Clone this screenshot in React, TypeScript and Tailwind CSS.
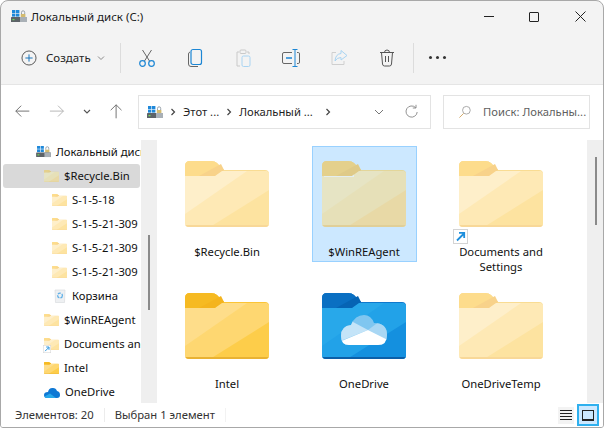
import React, { useId } from "react";

type Palette = {
  tab: string;
  tabDark: string;
  rim: string;
  light: string;
  mid: string;
  dark: string;
  bottom: string;
  gloss?: string;
};

const plain: Palette = { tab: "#fddc8c", tabDark: "#f8d28a", rim: "#f9dc93", light: "#feefca", mid: "#fee9b5", dark: "#fde3a0", bottom: "#f8d898" };
const selected: Palette = { tab: "#e4d08c", tabDark: "#dfca88", rim: "#e3d69a", light: "#e6e4c4", mid: "#e6e0b8", dark: "#e8d9a6", bottom: "#e0cf98", gloss: "#e4eef0" };
const yellow: Palette = { tab: "#f6ba22", tabDark: "#f4b41e", rim: "#fbc436", light: "#fedd8a", mid: "#fed771", dark: "#fdcd4a", bottom: "#e9b233" };
const blue: Palette = { tab: "#0a6fc2", tabDark: "#0664b4", rim: "#0f78cc", light: "#28a8ea", mid: "#22a2e8", dark: "#1490df", bottom: "#0c5fa8" };

function Folder({ p, className, cloud }: { p: Palette; className: string; cloud?: boolean }) {
  const id = "f" + useId().replace(/[^a-z0-9]/gi, "");
  const front = "M0 15 H30 L37 10 H80 Q84 10 84 14 V62 Q84 66 80 66 H4 Q0 66 0 62 Z";
  const cloudShape = "M27 52 Q19 52 19 43 Q19 33 29 32 Q33 22 42 22 Q49 22 52 30 Q65 30 65 42 Q65 52 56 52 Z";
  return (
    <svg viewBox="0 0 84 66" className={className}>
      <defs>
        <clipPath id={id}>
          <path d={front} />
        </clipPath>
        {cloud && (
          <clipPath id={id + "c"}>
            <path d={cloudShape} />
          </clipPath>
        )}
      </defs>
      <path d="M0 20 V5 Q0 0 5 0 H26 Q30 0 32 2 L39 9 H80 Q84 9 84 13 V30 H0 Z" fill={p.rim} />
      <path d="M0 20 V5 Q0 0 5 0 H26 Q30 0 32 2 L39 9 L31 15 H0 Z" fill={p.tab} />
      <path d="M14 15 L36 3 L39 9 L31 15 Z" fill={p.tabDark} />
      <g clipPath={`url(#${id})`}>
        <rect width="84" height="66" fill={p.light} />
        <path d="M0 53 L62 10 H84 V66 H0 Z" fill={p.mid} />
        <path d="M25 66 L84 29 V66 Z" fill={p.dark} />
        <rect y="64" width="84" height="2" fill={p.bottom} />
        {p.gloss && <rect x="2" y="13" width="30" height="3" fill={p.gloss} />}
      </g>
      {cloud && (
        <g clipPath={`url(#${id}c)`}>
          <rect x="15" y="20" width="55" height="35" fill="#7fc6f0" />
          <path d="M15 20 H28 L31 29 L46 37 L21 47 L15 55 Z" fill="#c4e4f8" />
          <path d="M46 37 L54 31 L70 20 V55 L64 46 Z" fill="#a9d7f4" />
          <path d="M46 37 L15 50 V55 H70 V47 L64 46 Z" fill="#ffffff" />
        </g>
      )}
    </svg>
  );
}

function DriveIcon({ className }: { className: string }) {
  return (
    <svg viewBox="0 0 16 13" className={className}>
      <rect x="1" y="0" width="3.4" height="3" fill="#1e88d9" />
      <rect x="5" y="0" width="3.4" height="3" fill="#1e88d9" />
      <rect x="1" y="3.6" width="3.4" height="3" fill="#1e88d9" />
      <rect x="5" y="3.6" width="3.4" height="3" fill="#1e88d9" />
      <path d="M10.5 4 V2.4 a1.6 1.6 0 0 1 3.2 0 V4" fill="none" stroke="#8f9aa3" strokeWidth="0.9" />
      <rect x="9.8" y="4" width="4.6" height="3.4" fill="#d3bb6f" />
      <rect x="0" y="7" width="16" height="5" rx="0.6" fill="#5d6368" />
      <rect x="9" y="7" width="7" height="5" fill="#a9b0b6" />
      <rect x="1.5" y="9" width="2" height="1.2" fill="#6fdc5a" />
    </svg>
  );
}

function Shortcut({ className }: { className: string }) {
  return (
    <svg viewBox="0 0 15 15" className={className}>
      <rect x="0.5" y="0.5" width="14" height="14" fill="#ffffff" stroke="#d4d4d4" />
      <path d="M4 11.5 L10.5 5 M6 3.8 H11.2 V9" fill="none" stroke="#1f8fdc" strokeWidth="1.8" />
    </svg>
  );
}

function Stroke({ size = 20, children, className }: { size?: number; children: React.ReactNode; className?: string }) {
  return (
    <svg width={size} height={size} viewBox="0 0 20 20" fill="none" strokeWidth="1" className={className}>
      {children}
    </svg>
  );
}

function ToolCell({ children }: { children: React.ReactNode }) {
  return <div className="flex h-full w-[48px] items-center justify-center">{children}</div>;
}

function Toolbar() {
  return (
    <div className="flex h-[52px] items-center pb-[1px]">
      <div className="flex w-[119px] items-center pl-[20px]">
        <Stroke size={16} className="shrink-0">
          <circle cx="10" cy="10" r="8.8" stroke="#555" strokeWidth="1.2" />
          <path d="M10 5.5 V14.5 M5.5 10 H14.5" stroke="#1170b8" strokeWidth="1.2" />
        </Stroke>
        <span className="ml-[9px] text-[11.5px] leading-none text-[#262626]">Создать</span>
        <svg width="8" height="6" viewBox="0 0 8 6" className="ml-[6px]">
          <path d="M1 1.5 L4 4.5 L7 1.5" fill="none" stroke="#8a8a8a" />
        </svg>
      </div>
      <div className="h-[30px] w-px bg-[#dcdcdc]" />
      <div className="ml-[2px] flex h-full">
        <ToolCell>
          <Stroke>
            <path d="M5.5 2 L12.5 13 M14.5 2 L7.5 13" stroke="#666" />
            <circle cx="5.5" cy="15.5" r="2.8" stroke="#1c86d4" strokeWidth="1.2" />
            <circle cx="14.5" cy="15.5" r="2.8" stroke="#1c86d4" strokeWidth="1.2" />
          </Stroke>
        </ToolCell>
        <ToolCell>
          <Stroke>
            <path d="M5 4 Q3.5 4.5 3.5 6 V16 Q3.5 18.5 6 18.5 H13" stroke="#666" />
            <rect x="6" y="1.5" width="10.5" height="15" rx="2" stroke="#1c86d4" strokeWidth="1.2" />
          </Stroke>
        </ToolCell>
        <ToolCell>
          <Stroke>
            <path d="M6 4 H4 V18 H7 M14 4 H16 V6" stroke="#c9c9c9" />
            <rect x="7" y="2" width="6" height="3.5" rx="1" stroke="#c9c9c9" />
            <rect x="9" y="8" width="8" height="10.5" rx="1.5" stroke="#a9d4f2" />
          </Stroke>
        </ToolCell>
        <ToolCell>
          <Stroke>
            <path d="M11 4.5 H3 Q1.5 4.5 1.5 6 V14 Q1.5 15.5 3 15.5 H11" stroke="#666" />
            <path d="M16 4.5 H17.5 Q18.5 4.5 18.5 6 V14 Q18.5 15.5 17.5 15.5 H16" stroke="#666" />
            <path d="M5 10 H11" stroke="#1c86d4" strokeWidth="1.6" />
            <path d="M11.5 1.5 H16.5 M14 1.5 V18.5 M11.5 18.5 H16.5" stroke="#1c86d4" />
          </Stroke>
        </ToolCell>
        <ToolCell>
          <Stroke>
            <path d="M7 4.5 H3 V16.5 H15 V13" stroke="#cfcfcf" />
            <path d="M12 2.5 L18 7.5 L12 12 V9.5 Q8 9.5 6 13 Q6.5 6 12 5.5 Z" stroke="#a9d4f2" />
          </Stroke>
        </ToolCell>
        <ToolCell>
          <Stroke>
            <path d="M3 4.5 H17 M7.5 4.5 Q7.5 2 10 2 Q12.5 2 12.5 4.5" stroke="#555" />
            <path d="M4.5 4.5 L5.5 16 Q5.7 18 7.5 18 H12.5 Q14.3 18 14.5 16 L15.5 4.5" stroke="#555" />
            <path d="M8.5 8 V14 M11.5 8 V14" stroke="#555" />
          </Stroke>
        </ToolCell>
      </div>
      <div className="ml-[2px] h-[30px] w-px bg-[#dcdcdc]" />
      <div className="ml-[15px] flex gap-[4px]">
        <span className="size-[3px] rounded-full bg-[#333]" />
        <span className="size-[3px] rounded-full bg-[#333]" />
        <span className="size-[3px] rounded-full bg-[#333]" />
      </div>
    </div>
  );
}

function Crumb() {
  return (
    <svg width="6" height="8" viewBox="0 0 6 8" className="shrink-0">
      <path d="M1.5 1 L4.5 4 L1.5 7" fill="none" stroke="#444" strokeWidth="1.2" />
    </svg>
  );
}

function NavRow() {
  return (
    <div className="flex h-[56px] border-t border-[#e5e5e5] bg-white pt-[10px] pl-[13px]">
      <div className="flex h-[34px] w-[124px] items-center text-[#555]">
        <Stroke size={18}>
          <path d="M17 9 H2 M8 3 L2 9 L8 15" stroke="#666" />
        </Stroke>
        <Stroke size={18} className="ml-[17px]">
          <path d="M1 9 H16 M10 3 L16 9 L10 15" stroke="#b0b0b0" />
        </Stroke>
        <svg width="8" height="6" viewBox="0 0 8 6" className="ml-[16px]">
          <path d="M1 1 L4 4 L7 1" fill="none" stroke="#555" strokeWidth="1.1" />
        </svg>
        <Stroke size={18} className="ml-[17px]">
          <path d="M9 17 V2 M3 8 L9 2 L15 8" stroke="#666" />
        </Stroke>
      </div>
      <div className="flex h-[34px] w-[293px] items-center border border-[#e3e3e3] pr-[10px] pl-[8px] text-[11.25px] text-[#1f1f1f]">
        <DriveIcon className="h-[13px] w-[16px]" />
        <span className="mx-[7px]"><Crumb /></span>
        <span>Этот ...</span>
        <span className="mx-[7px]"><Crumb /></span>
        <span>Локальный ...</span>
        <span className="ml-[12px]"><Crumb /></span>
        <svg width="10" height="6" viewBox="0 0 10 6" className="ml-auto">
          <path d="M1 1 L5 5 L9 1" fill="none" stroke="#777" />
        </svg>
        <Stroke size={16} className="ml-[20px]">
          <path d="M16.5 10 A7 7 0 1 1 14.5 4.5 M15 1 V5 H11" stroke="#777" />
        </Stroke>
      </div>
      <div className="ml-[12px] flex h-[34px] w-[147px] items-center overflow-hidden border border-[#e3e3e3] pl-[14px] text-[11.25px] whitespace-nowrap text-[#5f5f5f]">
        <Stroke size={14} className="shrink-0">
          <circle cx="12" cy="7.5" r="5.5" stroke="#888" />
          <path d="M8 12 L2 18" stroke="#d3a968" strokeWidth="1.4" />
        </Stroke>
        <span className="ml-[11px]">Поиск: Локальны...</span>
      </div>
    </div>
  );
}

function RecycleIcon() {
  return (
    <svg viewBox="0 0 12 14" className="h-[14px] w-[12px]">
      <path d="M1 1 H11 L10.5 13.5 H1.5 Z" fill="#eef0f2" stroke="#d5d8db" strokeWidth="0.6" />
      <circle cx="6" cy="6.5" r="2.4" fill="none" stroke="#5fb0e8" strokeWidth="1.3" strokeDasharray="3 1" />
    </svg>
  );
}

function OneDriveIcon() {
  return (
    <svg viewBox="0 0 16 11" className="h-[11px] w-[16px]">
      <path d="M4 5 Q5 0.5 9 1 Q12 1 13 4 Q16 4.5 16 8 Q16 11 13 11 H3 Q0 11 0 8 Q0 5 4 5 Z" fill="#0f78d4" />
      <path d="M0.5 9.5 L6 6.5 L12 11 H3 Q1 11 0.5 9.5 Z" fill="#28a8ea" />
    </svg>
  );
}

const smallFolder = "h-[12px] w-[15px]";

const navItems: { label: string; indent: string; icon: React.ReactNode; active?: boolean }[] = [
  { label: "Локальный диск (C:)", indent: "pl-[33px]", icon: <DriveIcon className="h-[12px] w-[15px]" /> },
  { label: "$Recycle.Bin", indent: "pl-[41px]", icon: <Folder p={selected} className={smallFolder} />, active: true },
  { label: "S-1-5-18", indent: "pl-[49px]", icon: <Folder p={plain} className={smallFolder} /> },
  { label: "S-1-5-21-309", indent: "pl-[49px]", icon: <Folder p={plain} className={smallFolder} /> },
  { label: "S-1-5-21-309", indent: "pl-[49px]", icon: <Folder p={plain} className={smallFolder} /> },
  { label: "S-1-5-21-309", indent: "pl-[49px]", icon: <Folder p={plain} className={smallFolder} /> },
  { label: "Корзина", indent: "pl-[49px]", icon: <span className="flex w-[15px] justify-center"><RecycleIcon /></span> },
  { label: "$WinREAgent", indent: "pl-[41px]", icon: <Folder p={plain} className={smallFolder} /> },
  {
    label: "Documents and Settings",
    indent: "pl-[41px]",
    icon: (
      <span className="relative block">
        <Folder p={plain} className={smallFolder} />
        <Shortcut className="absolute -bottom-[3px] -left-[1px] size-[8px]" />
      </span>
    ),
  },
  { label: "Intel", indent: "pl-[41px]", icon: <Folder p={yellow} className={smallFolder} /> },
  { label: "OneDrive", indent: "pl-[41px]", icon: <OneDriveIcon /> },
];

function Sidebar() {
  return (
    <div className="flex w-[156px] shrink-0">
      <div className="w-[140px] overflow-hidden">
        {navItems.map((item, i) => (
          <div key={i} className={`ml-[2px] flex h-[24px] items-center whitespace-nowrap ${item.indent} ${item.active ? "w-[137px] rounded-[3px] bg-[#d9d9d9]" : "w-[250px]"}`}>
            <span className="shrink-0">{item.icon}</span>
            <span className="ml-[5px] text-[11.25px] leading-none text-[#111]">{item.label}</span>
          </div>
        ))}
      </div>
      <div className="w-[16px] bg-[#efefef] pt-[95px] pl-[7px]">
        <div className="h-[75px] w-[2px] bg-[#8a8a8a]" />
      </div>
    </div>
  );
}

function Tile({ p, lines, active, cloud, shortcut }: { p: Palette; lines: string[]; active?: boolean; cloud?: boolean; shortcut?: boolean }) {
  return (
    <div className={`flex h-[116px] w-[105px] flex-col items-center border pt-[14px] pr-[1px] ${active ? "border-[#99d1ff] bg-[#cce8ff]" : "border-transparent"}`}>
      <div className="relative">
        <Folder p={p} cloud={cloud} className="h-[66px] w-[84px]" />
        {shortcut && <Shortcut className="absolute top-[68px] -left-[6px] size-[15px]" />}
      </div>
      <div className="mt-[17px] text-center text-[11.25px] leading-[15px] text-[#111]">
        {lines.map((l) => (
          <div key={l}>{l}</div>
        ))}
      </div>
    </div>
  );
}

function Content() {
  return (
    <div className="min-w-0 flex-1 overflow-hidden pt-[6px] pl-[18px]">
      <div className="grid grid-cols-[105px_105px_105px] gap-x-[32px] gap-y-[16px]">
        <Tile p={plain} lines={["$Recycle.Bin"]} />
        <Tile p={selected} lines={["$WinREAgent"]} active />
        <Tile p={plain} lines={["Documents and", "Settings"]} shortcut />
        <Tile p={yellow} lines={["Intel"]} />
        <Tile p={blue} lines={["OneDrive"]} cloud />
        <Tile p={plain} lines={["OneDriveTemp"]} />
      </div>
    </div>
  );
}

function StatusBar() {
  return (
    <div className="flex h-[24px] items-center bg-white pl-[14px] text-[11.25px] text-[#333]">
      <span>Элементов: 20</span>
      <div className="mx-[10px] h-[14px] w-px bg-[#ececec]" />
      <span>Выбран 1 элемент</span>
      <div className="ml-[10px] h-[14px] w-px bg-[#f2f2f2]" />
      <div className="mr-[4px] ml-auto flex items-center gap-[3px]">
        <div className="flex h-[17px] w-[16px] flex-col justify-center gap-[2px] bg-[#f3f3f3] px-[2px]">
          <span className="h-px bg-[#222]" />
          <span className="h-px bg-[#222]" />
          <span className="h-px bg-[#222]" />
          <span className="h-px bg-[#222]" />
        </div>
        <div className="flex h-[22px] w-[22px] items-center justify-center border-2 border-[#2fb0ee] bg-[#cce8ff]">
          <span className="h-[11px] w-[12px] border border-b-2 border-[#222]" />
        </div>
      </div>
    </div>
  );
}

export default function App() {
  return (
    <div className="h-[428px] w-[604px] bg-white font-['Noto_Sans','Open_Sans',sans-serif]">
      <div className="flex h-full w-full flex-col overflow-hidden rounded-t-[8px] rounded-b-[3px] border border-[#a8a8a8] bg-[#f3f3f3]">
        <div className="flex h-[31px] shrink-0 items-center pl-[10px]">
          <DriveIcon className="h-[13px] w-[16px]" />
          <span className="ml-[4px] text-[11.5px] leading-none text-[#1a1a1a]">Локальный диск (C:)</span>
          <div className="ml-auto flex items-center">
            <div className="flex w-[45px] justify-center"><span className="h-px w-[10px] bg-[#222]" /></div>
            <div className="flex w-[46px] justify-center"><span className="size-[10px] rounded-[1px] border border-[#222]" /></div>
            <div className="flex w-[46px] justify-center">
              <svg width="11" height="11" viewBox="0 0 11 11">
                <path d="M0.5 0.5 L10.5 10.5 M10.5 0.5 L0.5 10.5" stroke="#222" />
              </svg>
            </div>
          </div>
        </div>
        <Toolbar />
        <NavRow />
        <div className="flex min-h-0 flex-1 bg-white">
          <Sidebar />
          <Content />
          <div className="w-[16px] shrink-0 bg-[#efefef] pt-[17px] pl-[8px]">
            <div className="h-[68px] w-[2px] bg-[#8a8a8a]" />
          </div>
        </div>
        <StatusBar />
      </div>
    </div>
  );
}
